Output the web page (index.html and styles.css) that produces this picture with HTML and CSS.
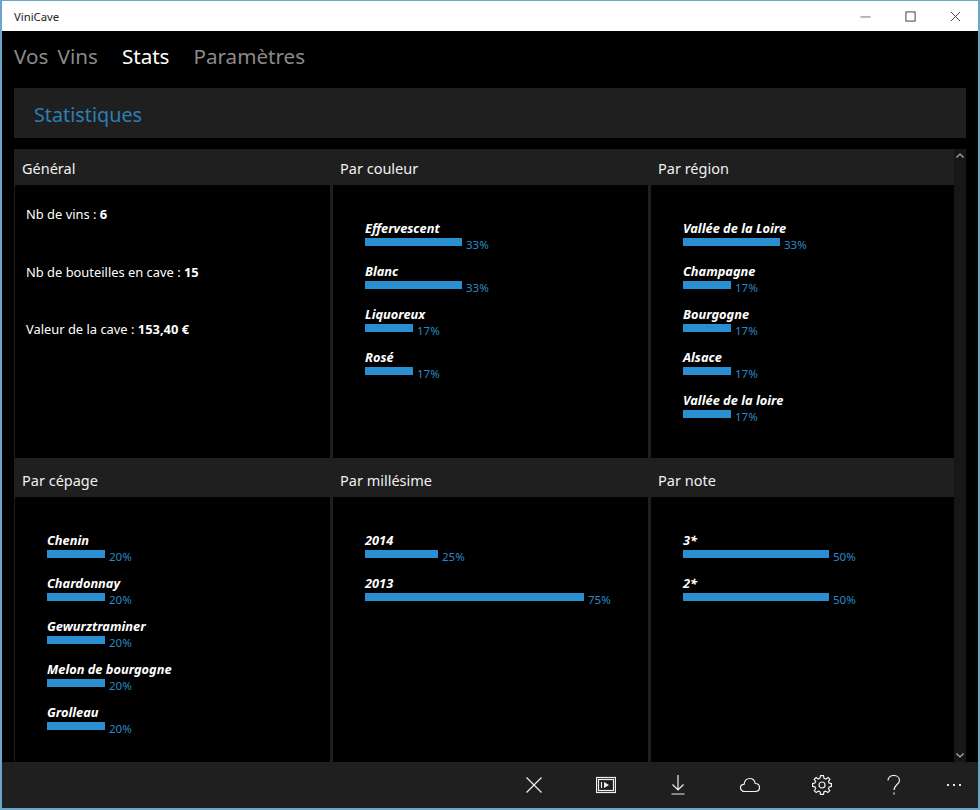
FILE: index.html
```html
<!DOCTYPE html>
<html lang="fr">
<head>
<meta charset="utf-8">
<title>ViniCave</title>
<link rel="stylesheet" href="styles.css">
</head>
<body>
<div class="window">
  <header class="titlebar">
    <span class="app-name">ViniCave</span>
    <div class="win-controls">
      <svg class="win-icon" viewBox="0 0 12 12"><path d="M0.5 6.5H11.5"/></svg>
      <svg class="win-icon" viewBox="0 0 12 12"><rect x="1" y="1" width="10" height="10"/></svg>
      <svg class="win-icon" viewBox="0 0 12 12"><path d="M1 1L11 11M11 1L1 11"/></svg>
    </div>
  </header>
  <main class="app">
    <nav class="pivot">
      <span class="pivot-item">Vos Vins</span>
      <span class="pivot-item active">Stats</span>
      <span class="pivot-item">Paramètres</span>
    </nav>
    <div class="page-title"><h1>Statistiques</h1></div>
    <div class="scroller">
      <div class="grid">
        <section class="card">
          <h2>Général</h2>
          <div class="card-body general">
            <p>Nb de vins : <b>6</b></p>
            <p>Nb de bouteilles en cave : <b>15</b></p>
            <p>Valeur de la cave : <b>153,40 €</b></p>
          </div>
        </section>
        <section class="card">
          <h2>Par couleur</h2>
          <div class="card-body">
            <div class="stat"><div class="stat-name">Effervescent</div><div class="stat-line"><span class="bar" style="width:97px"></span><span class="pct">33%</span></div></div>
            <div class="stat"><div class="stat-name">Blanc</div><div class="stat-line"><span class="bar" style="width:97px"></span><span class="pct">33%</span></div></div>
            <div class="stat"><div class="stat-name">Liquoreux</div><div class="stat-line"><span class="bar" style="width:48px"></span><span class="pct">17%</span></div></div>
            <div class="stat"><div class="stat-name">Rosé</div><div class="stat-line"><span class="bar" style="width:48px"></span><span class="pct">17%</span></div></div>
          </div>
        </section>
        <section class="card">
          <h2>Par région</h2>
          <div class="card-body">
            <div class="stat"><div class="stat-name">Vallée de la Loire</div><div class="stat-line"><span class="bar" style="width:97px"></span><span class="pct">33%</span></div></div>
            <div class="stat"><div class="stat-name">Champagne</div><div class="stat-line"><span class="bar" style="width:48px"></span><span class="pct">17%</span></div></div>
            <div class="stat"><div class="stat-name">Bourgogne</div><div class="stat-line"><span class="bar" style="width:48px"></span><span class="pct">17%</span></div></div>
            <div class="stat"><div class="stat-name">Alsace</div><div class="stat-line"><span class="bar" style="width:48px"></span><span class="pct">17%</span></div></div>
            <div class="stat"><div class="stat-name">Vallée de la loire</div><div class="stat-line"><span class="bar" style="width:48px"></span><span class="pct">17%</span></div></div>
          </div>
        </section>
        <section class="card lower">
          <h2>Par cépage</h2>
          <div class="card-body">
            <div class="stat"><div class="stat-name">Chenin</div><div class="stat-line"><span class="bar" style="width:58px"></span><span class="pct">20%</span></div></div>
            <div class="stat"><div class="stat-name">Chardonnay</div><div class="stat-line"><span class="bar" style="width:58px"></span><span class="pct">20%</span></div></div>
            <div class="stat"><div class="stat-name">Gewurztraminer</div><div class="stat-line"><span class="bar" style="width:58px"></span><span class="pct">20%</span></div></div>
            <div class="stat"><div class="stat-name">Melon de bourgogne</div><div class="stat-line"><span class="bar" style="width:58px"></span><span class="pct">20%</span></div></div>
            <div class="stat"><div class="stat-name">Grolleau</div><div class="stat-line"><span class="bar" style="width:58px"></span><span class="pct">20%</span></div></div>
          </div>
        </section>
        <section class="card lower">
          <h2>Par millésime</h2>
          <div class="card-body">
            <div class="stat"><div class="stat-name">2014</div><div class="stat-line"><span class="bar" style="width:73px"></span><span class="pct">25%</span></div></div>
            <div class="stat"><div class="stat-name">2013</div><div class="stat-line"><span class="bar" style="width:219px"></span><span class="pct">75%</span></div></div>
          </div>
        </section>
        <section class="card lower">
          <h2>Par note</h2>
          <div class="card-body">
            <div class="stat"><div class="stat-name">3*</div><div class="stat-line"><span class="bar" style="width:146px"></span><span class="pct">50%</span></div></div>
            <div class="stat"><div class="stat-name">2*</div><div class="stat-line"><span class="bar" style="width:146px"></span><span class="pct">50%</span></div></div>
          </div>
        </section>
      </div>
      <div class="scrollbar">
        <svg class="sb-arrow" viewBox="0 0 8 5"><path d="M0.5 4.5L4 1L7.5 4.5"/></svg>
        <svg class="sb-arrow" viewBox="0 0 8 5"><path d="M0.5 0.5L4 4L7.5 0.5"/></svg>
      </div>
    </div>
    <footer class="commandbar">
      <svg class="cmd" viewBox="0 0 20 20"><path d="M2.5 2.5L17.5 17.5M17.5 2.5L2.5 17.5"/></svg>
      <svg class="cmd" viewBox="0 0 20 20"><rect x="0.5" y="2.5" width="19" height="15"/><rect x="2.5" y="4.5" width="15" height="11"/><path class="fill" d="M8 7L13 10L8 13Z"/><path d="M5.5 7V13"/></svg>
      <svg class="cmd" viewBox="0 0 20 20"><path d="M10 0V15M4.5 9.5L10 15L15.5 9.5M3.5 19H16.5"/></svg>
      <svg class="cmd" viewBox="0 0 20 20"><path d="M5 16.5C2.5 16.5 .5 15 .5 12.7C.5 10.6 2 9.3 4 9.3C4.6 5.5 7 3.5 9.8 3.5C12.8 3.5 14.7 5.7 15.2 8.5C17.7 8.5 19.5 10.2 19.5 12.6C19.5 15 17.8 16.5 15.5 16.5Z"/></svg>
      <svg class="cmd" viewBox="0 0 20 20"><circle cx="10" cy="10" r="3"/><path d="M8.5 .7H11.5L12 3.2L13.9 4L16.1 2.6L17.9 4.4L16.4 6.6L17.2 8.2L19.4 8.6V11.4L17.2 11.9L16.4 13.5L17.8 15.6L15.8 17.5L13.7 16.1L12 16.8L11.5 19.3H8.5L8 16.8L6.3 16.1L4.2 17.5L2.3 15.6L3.7 13.5L2.9 11.9L.6 11.4V8.6L2.9 8.1L3.7 6.4L2.2 4.4L4.1 2.5L6.2 4L8 3.2Z"/></svg>
      <svg class="cmd" viewBox="0 0 20 20"><path d="M4 5.5C4 2.5 6.6 .5 9.6 .5C12.8 .5 15.5 2.5 15.5 5.5C15.5 9.5 10 9.7 10 15M10 17.5V19.5"/></svg>
      <div class="more"><i></i><i></i><i></i></div>
    </footer>
  </main>
</div>
</body>
</html>
```
FILE: styles.css
```css
* { box-sizing: border-box; }
html, body { margin: 0; padding: 0; background: #000; }
body { font-family: "Noto Sans", "Open Sans", sans-serif; }
.window {
  width: 980px; height: 810px; display: flex; flex-direction: column;
  border: 1px solid #6aa6c8; border-width: 1px 2px 2px 2px; overflow: hidden;
}
.titlebar {
  height: 30px; flex: none; background: #fff; display: flex; align-items: center;
  justify-content: space-between; padding-left: 12px;
}
.app-name { font-size: 11.3px; color: #222; }
.win-controls { display: flex; }
.win-icon { width: 45px; height: 11px; fill: none; stroke: #333; stroke-width: 1; }
.win-controls svg:nth-child(1) { stroke: #666; }
.app { flex: 1; display: flex; flex-direction: column; background: #000; min-height: 0; }
.pivot { height: 57px; flex: none; display: flex; gap: 24px; padding: 7px 0 0 12px; }
.pivot-item { font-size: 20.6px; line-height: 36px; color: #8a8a8a; word-spacing: 4px; }
.pivot-item.active { color: #fff; }
.page-title { height: 50px; margin: 0 12px; background: #1f1f1f; flex: none; padding-left: 20px; }
.page-title h1 { margin: 0; font-size: 19.8px; font-weight: 400; line-height: 54px; color: #2a80b4; }
.scroller { flex: 1; min-height: 0; margin: 11px 12px 0; display: flex; overflow: hidden; }
.grid {
  width: 940px; flex: none; display: grid; grid-template-columns: 318px 318px 318px;
  grid-template-rows: 309px 1fr; overflow: hidden;
}
.scrollbar {
  width: 12px; flex: none; background: #171717; display: flex; flex-direction: column;
  justify-content: space-between; align-items: center; padding: 4px 0;
}
.sb-arrow { width: 8px; height: 5px; fill: none; stroke: #b0b0b0; stroke-width: 1.2; }
.card { display: flex; flex-direction: column; border: 0 solid #1f1f1f; border-width: 0 2px 0 1px; min-height: 0; }
.card h2 {
  margin: 0 -2px 0 -1px; height: 36px; flex: none; background: #1f1f1f; color: #f0f0f0;
  font-size: 14.5px; font-weight: 400; line-height: 38px; padding-left: 8px;
}
.card.lower h2 { height: 39px; line-height: 44px; }
.card-body { flex: 1; padding: 35px 0 0 32px; }
.card-body.general { padding: 20px 0 0 11px; color: #fff; font-size: 12.9px; }
.general p { margin: 0 0 39.5px; line-height: 18px; }
.general b { font-weight: 700; }
.stat { height: 43px; }
.stat-name { font-size: 12.8px; font-style: italic; font-weight: 700; color: #fff; line-height: 17px; height: 18px; }
.stat-line { display: flex; align-items: flex-start; height: 20px; }
.bar { display: block; height: 8px; background: #2a8fd0; }
.pct { font-size: 11.5px; color: #2a8ac4; margin-left: 4px; line-height: 16px; margin-top: -1px; }
.commandbar {
  height: 46px; flex: none; background: #1f1f1f; display: flex; align-items: center;
  justify-content: flex-end;
}
.cmd { width: 20px; height: 20px; margin-right: 52px; fill: none; stroke: #f0f0f0; stroke-width: 1.2; flex: none; }
.cmd .fill { fill: #f0f0f0; stroke: none; }
.more { display: flex; gap: 4px; margin-right: 17px; margin-left: -9px; }
.more i { width: 2px; height: 2px; background: #e8e8e8; display: block; }
```
